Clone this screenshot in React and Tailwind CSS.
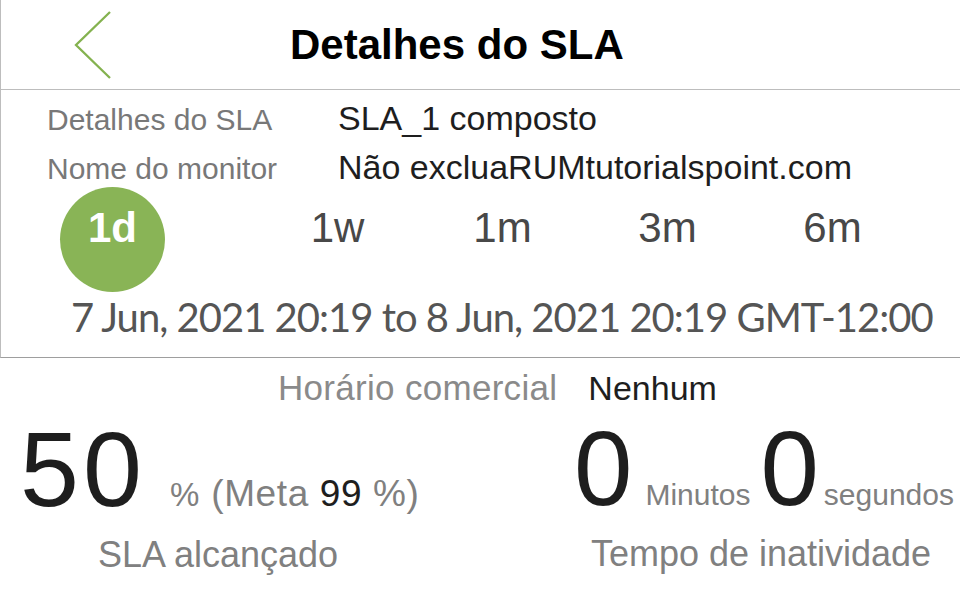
const PERIODS = ["1w", "1m", "3m", "6m"];

const BackChevron = () => (
  <svg width="38" height="70" viewBox="0 0 38 70" className="shrink-0">
    <polyline
      points="36,2 2,35 36,68"
      fill="none"
      stroke="#84b24f"
      strokeWidth="2.3"
    />
  </svg>
);

const InfoRow = ({ label, value }) => (
  <div className="flex items-center h-[49px]">
    <div className="w-[337px] pl-[46px] text-[30px] leading-none text-[#787878]">{label}</div>
    <div className="text-[34px] leading-none text-[#1e1e1e] mt-[-3px]">{value}</div>
  </div>
);

export default function App() {
  return (
    <div className="w-[960px] h-[600px] bg-white overflow-hidden font-['Liberation_Sans',Arial,sans-serif]">
      {/* parte superior */}
      <div className="h-[358px] border-l border-b border-l-[#bdbdbd] border-b-[#9e9e9e]">
        <header className="h-[90px] border-b border-[#bdbdbd] flex items-center">
          <div className="ml-[73px] pt-[1px]">
            <BackChevron />
          </div>
          <h1 className="ml-[178px] text-[42px] font-bold leading-none text-black">
            Detalhes do SLA
          </h1>
        </header>

        <div className="pt-[5px]">
          <InfoRow label="Detalhes do SLA" value="SLA_1 composto" />
          <InfoRow label="Nome do monitor" value="Não excluaRUMtutorialspoint.com" />
        </div>

        <div className="flex h-[105px] mt-[-6px]">
          <div className="ml-[59px] w-[105px] h-[105px] rounded-full bg-[#89b456] flex justify-center pt-[20px]">
            <span className="text-[42px] font-bold leading-none text-white">1d</span>
          </div>
          <div className="ml-[90px] flex">
            {PERIODS.map((p) => (
              <div key={p} className="w-[165px] flex justify-center pt-[20px]">
                <span className="text-[42px] leading-none text-[#484848]">{p}</span>
              </div>
            ))}
          </div>
        </div>

        <div className="mt-[5px] pl-[70px] text-[40px] tracking-[-1px] leading-none text-[#555555] font-['Lato',sans-serif] whitespace-nowrap">
          7 Jun, 2021 20:19 to 8 Jun, 2021 20:19 GMT-12:00
        </div>
      </div>

      {/* parte inferior */}
      <div className="pt-[12px] flex items-center">
        <span className="ml-[278px] text-[35px] tracking-[0.3px] leading-none text-[#8a8a8a]">Horário comercial</span>
        <span className="ml-[31px] text-[34px] leading-none text-[#1e1e1e]">Nenhum</span>
      </div>

      <div className="flex mt-[11px]">
        <div className="w-[436px] flex flex-col">
          <div className="flex items-baseline leading-none whitespace-nowrap pl-[20px]">
            <span className="text-[106px] tracking-[4px] text-[#1e1e1e]">50</span>
            <span className="ml-[24px] text-[33px] text-[#808080]">%</span>
            <span className="ml-[12px] text-[37px] tracking-[0.6px] text-[#808080]">
              (Meta <span className="text-[#1e1e1e]">99</span> %)
            </span>
          </div>
          <div className="mt-[15px] text-center text-[36px] leading-none text-[#808080]">SLA alcançado</div>
        </div>
        <div className="ml-[126px] w-[398px] flex flex-col">
          <div className="flex items-baseline leading-none whitespace-nowrap pl-[12px]">
            <span className="text-[105px] text-[#1e1e1e]">0</span>
            <span className="ml-[13px] text-[30px] text-[#808080]">Minutos</span>
            <span className="ml-[10px] text-[105px] text-[#1e1e1e]">0</span>
            <span className="ml-[5px] text-[30px] text-[#808080]">segundos</span>
          </div>
          <div className="mt-[15px] text-center text-[36px] leading-none text-[#808080]">Tempo de inatividade</div>
        </div>
      </div>
    </div>
  );
}
